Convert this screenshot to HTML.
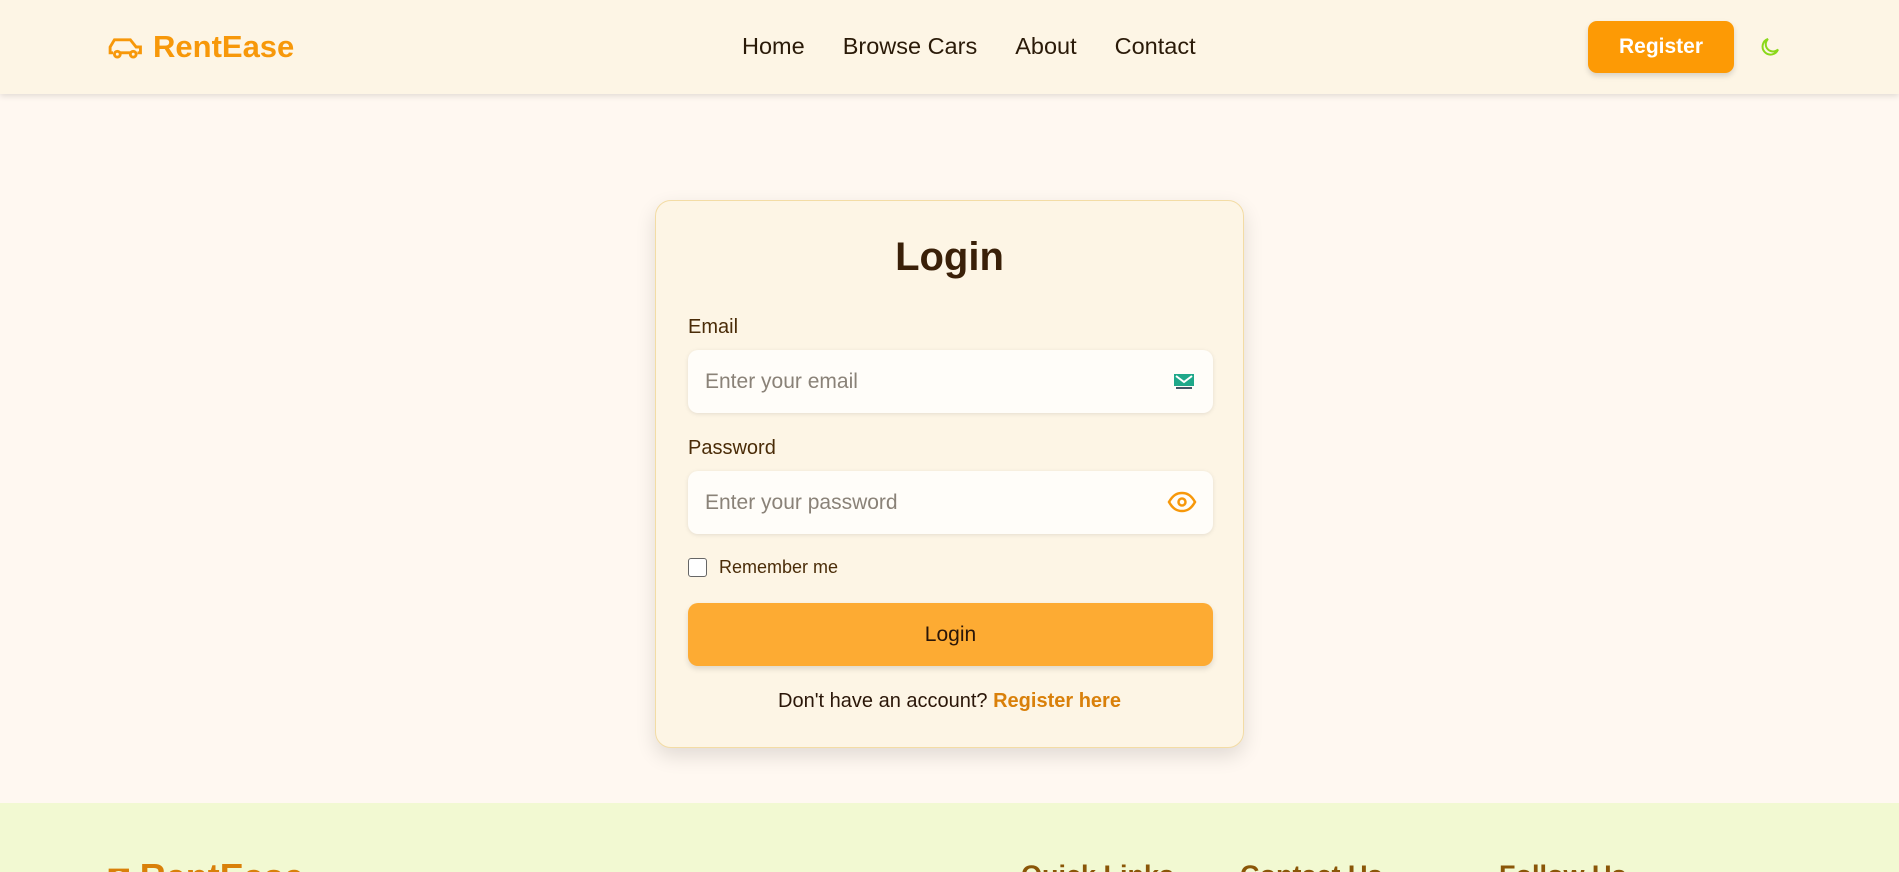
<!DOCTYPE html>
<html style="overflow:hidden"><head><style>
*{box-sizing:border-box;margin:0;padding:0}
body{width:1899px;height:872px;overflow:hidden;background:#fff8f1;font-family:"Liberation Sans",sans-serif;color:#3a2308;position:relative}
.hdr{position:absolute;left:0;top:0;width:1899px;height:94px;background:#fdf5e5;box-shadow:0 2px 6px rgba(0,0,0,.12)}
.logo{position:absolute;left:108px;top:29px;display:flex;align-items:center;gap:9px;color:#f7980a;font-weight:bold;font-size:31px}
.nav{position:absolute;left:742px;top:33px;font-size:23.5px;color:#2a1a08}
.nav span{margin-right:38px}
.reg{position:absolute;left:1588px;top:21px;width:146px;height:52px;background:#fd9a05;border-radius:9px;color:#fff;font-weight:bold;font-size:21px;text-align:center;line-height:52px;box-shadow:0 3px 6px rgba(0,0,0,.15)}
.card{position:absolute;left:655px;top:200px;width:589px;height:548px;background:#fdf5e5;border:1px solid #f3dca5;border-radius:16px;box-shadow:0 8px 20px rgba(0,0,0,.12)}
h1{position:absolute;width:100%;text-align:center;top:34px;font-size:40px;color:#3a2008}
.lbl{position:absolute;left:32px;font-size:20px;color:#4a2c08}
.inp{position:absolute;left:32px;width:525px;height:63px;background:#fffdf9;border-radius:10px;box-shadow:0 1px 4px rgba(0,0,0,.1);font-size:21px;color:#8a8278;padding-left:17px;line-height:63px}
.btn{position:absolute;left:32px;top:402px;width:525px;height:63px;background:#fdab33;border-radius:10px;text-align:center;line-height:63px;font-size:21px;color:#2a1608;box-shadow:0 3px 6px rgba(0,0,0,.12)}
.ft{position:absolute;left:0;top:803px;width:1899px;height:69px;background:#f2f9d2;overflow:hidden}
.ft div{position:absolute;top:57px;font-weight:bold;color:#8a5608;font-size:27px}
</style></head><body>
<div class="hdr">
 <div class="logo"><svg width="36" height="26" viewBox="0 0 24 18" fill="none" stroke="#f7980a" stroke-width="2"><path d="M3 13H1V9l3-5h11l4 5h3v4h-2"/><circle cx="6" cy="14" r="2"/><circle cx="17" cy="14" r="2"/><path d="M8 13h7"/></svg>RentEase</div>
 <div class="nav"><span>Home</span><span>Browse Cars</span><span>About</span><span>Contact</span></div>
 <div class="reg">Register</div>
 <svg style="position:absolute;left:1758px;top:35px" width="24" height="24" viewBox="0 0 24 24" fill="none" stroke="#8ad81a" stroke-width="2"><path d="M20 14.5A8 8 0 1 1 10 4a6.5 6.5 0 0 0 10 10.5z"/></svg>
</div>
<div class="card">
 <h1>Login</h1>
 <div class="lbl" style="top:115px">Email</div>
 <div class="inp" style="top:149px">Enter your email<svg style="position:absolute;right:18px;top:23px" width="22" height="17" viewBox="0 0 22 17"><rect x="1" y="1" width="20" height="12" fill="#1fa88a"/><path d="M3 3l8 6 8-6" stroke="#fff" stroke-width="2" fill="none"/><rect x="3" y="14" width="16" height="2" fill="#456"/></svg></div>
 <div class="lbl" style="top:236px">Password</div>
 <div class="inp" style="top:270px">Enter your password<svg style="position:absolute;right:16px;top:19px" width="30" height="24" viewBox="0 0 30 24" fill="none" stroke="#f7980a" stroke-width="2.5"><path d="M2 12C6 5 10 3 15 3s9 2 13 9c-4 7-8 9-13 9S6 19 2 12z"/><circle cx="15" cy="12" r="3.5"/></svg></div>
 <div style="position:absolute;left:32px;top:357px;width:19px;height:19px;border:1.5px solid #666;border-radius:3px;background:#fff"></div>
 <div style="position:absolute;left:63px;top:356px;font-size:18px;color:#4a2c08">Remember me</div>
 <div class="btn">Login</div>
 <div style="position:absolute;width:100%;text-align:center;top:489px;font-size:20px;color:#2a1608">Don't have an account? <b style="color:#d9800a">Register here</b></div>
</div>
<div class="ft">
 <div style="left:108px;font-size:36px;top:53px;color:#d9800a">◘ RentEase</div>
 <div style="left:1021px">Quick Links</div>
 <div style="left:1240px">Contact Us</div>
 <div style="left:1499px">Follow Us</div>
</div>
</body></html>
